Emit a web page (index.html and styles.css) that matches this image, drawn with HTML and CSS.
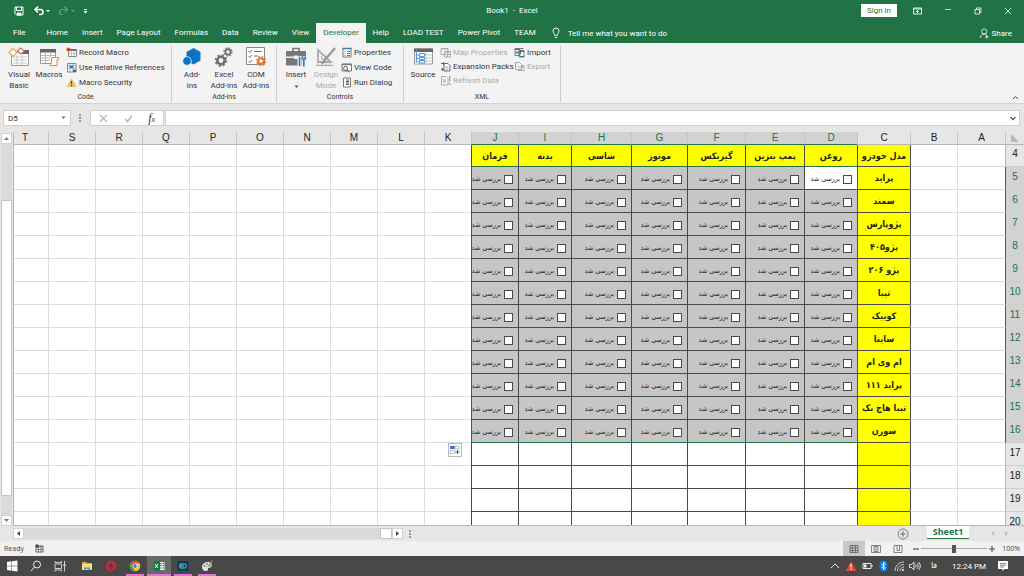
FILE: index.html
```html
<!DOCTYPE html>
<html lang="en">
<head>
<meta charset="utf-8">
<meta name="viewport" content="width=device-width, initial-scale=1">
<title>Book1 - Excel</title>
<link rel="stylesheet" href="styles.css">
</head>
<body>
<header class="titlebar">
  <div class="quick">
    <button class="plain" aria-label="Save"><svg width="12" height="12" viewBox="0 0 12 12" fill="none" stroke="#fff"><path d="M2 2h8v8H3.500L2 8.500z M3.500 2v3.500h5V2"/><path d="M4 8h4v2H4z" fill="#fff"/></svg></button>
    <button class="plain" aria-label="Undo"><svg width="17" height="12" viewBox="0 0 17 12"><path d="M2 4.500h5.500a2.500 2.500 0 0 1 0 5H6M5 1.500l-3 3 3 3" fill="none" stroke="#fff" stroke-width="1.600"/><path d="M13 5h4l-2 2z" fill="#fff"/></svg></button>
    <button class="plain faded" aria-label="Redo"><svg width="17" height="12" viewBox="0 0 17 12"><path d="M9.500 4.500H4a2.500 2.500 0 0 0 0 5h1M6.500 1.500l3 3-3 3" fill="none" stroke="#fff" stroke-width="1.200"/><path d="M13 5h4l-2 2z" fill="#fff"/></svg></button>
    <button class="plain" aria-label="Customize toolbar"><svg width="5" height="6" viewBox="0 0 5 6" fill="#fff"><path d="M1 1h3v1H1zM.500 3h4l-2 2.500z"/></svg></button>
  </div>
  <h1 class="doc-title">Book1&nbsp; -&nbsp; Excel</h1>
  <div class="window-tools">
    <button class="signin">Sign in</button>
    <button class="plain" aria-label="Ribbon display options"><svg width="9" height="8" viewBox="0 0 9 8" fill="none" stroke="#e5f0e9"><path d="M.5 1h8v6h-8zM.5 2h8M4.500 6.500V4M3 5l1.500-1.500L6 5"/></svg></button>
    <button class="plain" aria-label="Minimize"><svg width="8" height="8" viewBox="0 0 8 8" stroke="#b5d3c1"><path d="M1 2.500h6"/></svg></button>
    <button class="plain" aria-label="Restore"><svg width="8" height="8" viewBox="0 0 8 8" fill="none" stroke="#e5f0e9" stroke-width=".9"><path d="M1 2.500h4.500V7H1zM2.500 2.500V1H7v4.500H5.500"/></svg></button>
    <button class="plain" aria-label="Close"><svg width="8" height="8" viewBox="0 0 8 8" stroke="#e5f0e9" stroke-width=".9"><path d="M1 1l6 6M7 1L1 7"/></svg></button>
  </div>
</header>

<nav class="tabs">
  <a href="#" class="tab file">File</a><a href="#" class="tab">Home</a><a href="#" class="tab">Insert</a><a href="#" class="tab">Page Layout</a><a href="#" class="tab">Formulas</a><a href="#" class="tab">Data</a><a href="#" class="tab">Review</a><a href="#" class="tab">View</a><a href="#" class="tab active">Developer</a><a href="#" class="tab">Help</a><a href="#" class="tab">LOAD TEST</a><a href="#" class="tab">Power Pivot</a><a href="#" class="tab">TEAM</a>
  <button class="tell"><svg width="8" height="12" viewBox="0 0 8 12" fill="none" stroke="#fff" stroke-width=".9"><path d="M2.700 8.500C2.700 6.500 1 6 1 4a3 3 0 0 1 6 0c0 2-1.700 2.500-1.700 4.500zM2.700 10.500h2.600"/></svg>Tell me what you want to do</button>
  <button class="share"><svg width="9" height="11" viewBox="0 0 9 11" fill="none" stroke="#fff" stroke-width=".8"><circle cx="4.200" cy="3.500" r="2.600"/><path d="M.5 10c0-2.500 1.500-4 3.500-4 1 0 2 .5 2.500 1.200M6.800 7v3.500M5 8.800h3.600"/></svg>Share</button>
</nav>

<section class="ribbon">
  <div class="group g-code">
    <div class="tools">
      <button class="big"><svg width="22" height="20" viewBox="0 0 22 20"><path d="M3.500 5.500h17v13h-17z" fill="#fff" stroke="#999"/><path d="M12 3h9v4h-9z" fill="#666"/><path d="M5 10h14M5 13h14M5 16h14M9 8v10M14 8v10" stroke="#bbb" stroke-width=".8"/><path d="M5 1.500l4 4-4 4-4-4z" fill="#fff" stroke="#e9ae55" stroke-width="1.300"/><path d="M12.500 1l4 3-3.500 3-3.500-3z" fill="#fff" stroke="#dc6b6b" stroke-width="1.200"/></svg><span>Visual<br>Basic</span></button>
      <button class="big"><svg width="22" height="20" viewBox="0 0 22 20"><path d="M2.500 3h15v13.500h-15z" fill="#fff" stroke="#999"/><path d="M2 2h16v3.500H2z" fill="#666"/><path d="M3 8.500h14M3 11h9M3 13.500h9M7.500 6v10M12.500 6v4" stroke="#aaa" stroke-width=".8"/><path d="M13.500 10.500h7v2h-1.500v6h-7v-2h1.500z" fill="#fff" stroke="#e08b3a"/></svg><span>Macros</span></button>
      <div class="list">
        <button><svg viewBox="0 0 11 11"><path d="M2.500 2.500h8v7h-8z" fill="#fff" stroke="#888"/><path d="M2.500 3h8" stroke="#555" stroke-width="1.500"/><path d="M3 6.500h7M5.500 4v5M8 4v5" stroke="#aaa" stroke-width=".7"/><circle cx="2.500" cy="2.500" r="2.100" fill="#d24726"/></svg>Record Macro</button>
        <button><svg viewBox="0 0 11 11"><path d="M1.500 1.500h8.500v8.500H1.500z" fill="#fff" stroke="#888"/><path d="M1 3.500h9M1 6h9M4 1v9M7 1v9" stroke="#8a96a5" stroke-width=".8"/><path d="M4 4h3v2H4zM7 7.500h3V10H7z" fill="#2b6cb5"/></svg>Use Relative References</button>
        <button><svg viewBox="0 0 11 11"><path d="M5.500 1l5 9h-10z" fill="#edbd68"/><path d="M5.500 4v3.200M5.500 8v1.200" stroke="#554426" stroke-width="1.100"/></svg>Macro Security</button>
      </div>
    </div>
    <h2>Code</h2>
  </div>
  <div class="group g-addins">
    <div class="tools">
      <button class="big"><svg width="22" height="20" viewBox="0 0 22 20" fill="#0a72c7"><path d="M12.500 1l7 4v8.500l-7 4-7-4V5z"/><circle cx="6" cy="14" r="4.300" stroke="#f3f3f3" stroke-width=".8"/></svg><span>Add-<br>ins</span></button>
      <button class="big"><svg width="22" height="20" viewBox="0 0 22 20" fill="none" stroke="#707070"><circle cx="8" cy="13.500" r="3.700" stroke-width="2.600"/><circle cx="8" cy="13.500" r="5.400" stroke-width="1.800" stroke-dasharray="2.100 2.140"/><circle cx="15" cy="5" r="2.600" stroke-width="1.700"/><circle cx="15" cy="5" r="4" stroke-width="1.400" stroke-dasharray="1.600 1.540"/></svg><span>Excel<br>Add-ins</span></button>
      <button class="big"><svg width="22" height="20" viewBox="0 0 22 20" fill="none"><path d="M1.500 .5h18v17h-18z" fill="#fff" stroke="#888"/><path d="M3.500 4l1.500 1.500L7 3M3.500 9l1.500 1.500L7 8M3.500 14l1.500 1.500L7 13M9 4.500h8M9 9h4" stroke="#777"/><circle cx="16" cy="14" r="2.700" stroke="#e27a2c" stroke-width="2"/><circle cx="16" cy="14" r="4.300" stroke="#e27a2c" stroke-width="1.600" stroke-dasharray="1.700 1.680"/></svg><span>COM<br>Add-ins</span></button>
    </div>
    <h2>Add-ins</h2>
  </div>
  <div class="group g-controls">
    <div class="tools">
      <button class="big"><svg width="22" height="20" viewBox="0 0 22 20"><path d="M8 4V1.500h6V4" fill="none" stroke="#777" stroke-width="1.500"/><path d="M1 4h20v5.500H1zM1 11h20v7.500H1z" fill="#777"/><path d="M9 8.500h4v3.500H9z" fill="#eee"/><path d="M14.500 9.500v10M19 9.500v10" stroke="#f3f3f3" stroke-width="4"/><path d="M14.500 10v9M18.800 13v6.500M17.500 9.500v2.500h2.800V9.500" stroke="#3977b7" stroke-width="1.600" fill="none"/></svg><span>Insert</span><svg class="drop" width="5" height="4" viewBox="0 0 5 4"><path d="M.5 .5h4l-2 2.500z" fill="#555"/></svg></button>
      <button class="big" disabled><svg width="22" height="20" viewBox="0 0 22 20" fill="none" stroke="#aaa"><path d="M3 3v12h13z" stroke-width="1.800"/><path d="M6.500 9v3h4" /><path d="M20 1L9 14l-2 3" stroke="#999" stroke-width="2.300"/><path d="M1 18.500h18M3 16.500v2M7 16.500v2M11 16.500v2M15 16.500v2" /></svg><span>Design<br>Mode</span></button>
      <div class="list">
        <button><svg viewBox="0 0 11 11"><path d="M2 1.500h8v8.500H2z" fill="#fff" stroke="#777"/><path d="M1.500 1.500h9" stroke="#3977b7" stroke-width="1.500"/><path d="M3.500 4.500h1M6 4.500h3M3.500 6.500h1M6 6.500h3M3.500 8.500h1M6 8.500h3" stroke="#3977b7" stroke-width=".9"/></svg>Properties</button>
        <button><svg viewBox="0 0 11 11" fill="none"><path d="M1 2h9.500v7H1z" fill="#fff" stroke="#777"/><path d="M1 2.500h9.500" stroke="#777" stroke-width="1.500"/><circle cx="4.500" cy="6.500" r="2" fill="#fff" stroke="#555"/><path d="M6 8l2 2.300" stroke="#555"/></svg>View Code</button>
        <button><svg viewBox="0 0 11 11"><path d="M2.500 1h7v9h-7z" fill="#fff" stroke="#777"/><path d="M5 3h3M5 4.500h3M5 6h3M5 7.500h3" stroke="#444" stroke-width=".9"/></svg>Run Dialog</button>
      </div>
    </div>
    <h2>Controls</h2>
  </div>
  <div class="group g-xml">
    <div class="tools">
      <button class="big"><svg width="22" height="20" viewBox="0 0 22 20"><path d="M2.500 2h18v15h-18z" fill="#fff" stroke="#999"/><path d="M2 1.500h19V5H2z" fill="#666"/><path d="M3 8h17M3 11h17M3 14h17M14 5v12" stroke="#bbb" stroke-width=".8"/><path d="M4.500 2v13h3M4.500 8h3M4.500 11.500h3M7.500 6.500h5v3h-5zM7.500 10.500h5v2h-5zM7.500 13.500h5v2.500h-5z" fill="#fff" stroke="#4b8ed0" stroke-width=".9"/></svg><span>Source</span></button>
      <div class="list">
        <button disabled><svg viewBox="0 0 11 11"><path d="M1 1.500h7v6H1zM4.500 4.500h6v5.500h-6z" fill="#f6f6f6" stroke="#aaa"/><path d="M1 2h7M4.500 5h6M5 7.500h5M7.500 5v5" stroke="#aaa"/></svg>Map Properties</button>
        <button><svg viewBox="0 0 11 11"><path d="M4 2.500h4l2 2V10H4z" fill="#fff" stroke="#666"/><path d="M5.500 6h3M5.500 8h3" stroke="#999"/><path d="M1 2.500h4M3.500 1v3M1 8.500h3M2.500 7v3" stroke="#298060"/></svg>Expansion Packs</button>
        <button disabled><svg viewBox="0 0 11 11"><path d="M1.500 1.500H6l2 2V10H1.500z" fill="#f6f6f6" stroke="#aaa"/><path d="M3 5h3M3 7h3M9.700 1v5.500M9.700 8v2" stroke="#999" stroke-width="1.200"/></svg>Refresh Data</button>
      </div>
      <div class="list">
        <button><svg viewBox="0 0 11 11"><path d="M1 1.500h5v7H1zM5 3.500h5V10H5z" fill="#fff" stroke="#777"/><path d="M1 2.500h5M5 4.500h5M1.500 5h3M6.500 1.500h3" stroke="#666"/><path d="M2 6h5M5.500 4.500L7 6 5.500 7.500" fill="none" stroke="#2b71b5"/><path d="M6 9.500h4" stroke="#298060"/></svg>Import</button>
        <button disabled><svg viewBox="0 0 11 11" fill="none" stroke="#aaa"><path d="M1.500 1.500h4l2 2v5h-6z"/><path d="M4 9.500h6v-5H8M4 6h5M7.500 4.500L9 6 7.500 7.500"/></svg>Export</button>
      </div>
    </div>
    <h2>XML</h2>
  </div>
  <button class="plain collapse" aria-label="Collapse the ribbon"><svg width="7" height="5" viewBox="0 0 7 5" fill="none" stroke="#444"><path d="M1 4l2.500-2.500L6 4"/></svg></button>
</section>

<section class="formula">
  <button class="namebox"><span>D5</span><svg width="5" height="4" viewBox="0 0 5 4"><path d="M.5 .5h4l-2 2.500z" fill="#666"/></svg></button>
  <i class="dots"></i>
  <div class="fx-tools">
    <button class="plain" aria-label="Cancel"><svg width="9" height="9" viewBox="0 0 9 9" stroke="#b5b5b5" stroke-width="1.200"><path d="M1 1l7 7M8 1L1 8"/></svg></button>
    <button class="plain" aria-label="Enter"><svg width="9" height="9" viewBox="0 0 9 9" fill="none" stroke="#b5b5b5" stroke-width="1.500"><path d="M1 5l2.500 2.500L8 1.500"/></svg></button>
    <button class="plain fx" aria-label="Insert function">f<small>x</small></button>
  </div>
  <div class="entry"><input type="text" aria-label="Formula bar"><svg width="6" height="5" viewBox="0 0 6 5" fill="none" stroke="#555" stroke-width="1.300"><path d="M.5 1L3 3.500 5.500 1"/></svg></div>
</section>

<main class="sheet">
  <div class="vscroll">
    <button aria-label="Scroll up"><svg width="5" height="3" viewBox="0 0 5 3"><path d="M0 3h5L2.500 0z" fill="#777"/></svg></button>
    <div class="vtrack"><div class="vthumb"></div></div>
    <button aria-label="Scroll down"><svg width="5" height="3" viewBox="0 0 5 3"><path d="M0 0h5L2.500 3z" fill="#777"/></svg></button>
  </div>
  <div class="gridview" dir="rtl"><table class="grid" id="grid"></table></div>
</main>

<section class="sheetbar">
  <div class="hscroll">
    <button aria-label="Scroll left"><svg width="3" height="5" viewBox="0 0 3 5"><path d="M3 0v5L0 2.500z" fill="#444"/></svg></button>
    <div class="htrack"><div class="hthumb"></div></div>
    <button aria-label="Scroll right"><svg width="3" height="5" viewBox="0 0 3 5"><path d="M0 0v5l3-2.500z" fill="#444"/></svg></button>
  </div>
  <i class="dots"></i>
  <button class="plain add" aria-label="New sheet"><svg width="12" height="12" viewBox="0 0 12 12" fill="none" stroke="#777" stroke-width=".9"><circle cx="6" cy="6" r="5"/><path d="M6 3.200v5.600M3.200 6h5.600" stroke-width="1.200"/></svg></button>
  <a href="#" class="sheettab">Sheet1</a>
  <div class="sheetnav">
    <svg width="3" height="5" viewBox="0 0 3 5"><path d="M3 0v5L0 2.500z" fill="#bbb"/></svg>
    <svg width="3" height="5" viewBox="0 0 3 5"><path d="M0 0v5l3-2.500z" fill="#bbb"/></svg>
  </div>
</section>

<footer class="status">
  <span class="ready">Ready</span>
  <button class="plain" aria-label="Record macro"><svg width="9" height="9" viewBox="0 0 9 9"><path d="M1 2h7v6H1z" fill="#fff" stroke="#666"/><path d="M1 3h7M1 5.500h7M3.500 2v6M6 2v6" stroke="#666" stroke-width=".8"/><circle cx="2" cy="2" r="1.700" fill="#444"/></svg></button>
  <div class="views">
    <button class="plain on" aria-label="Normal view"><svg width="10" height="10" viewBox="0 0 10 10" fill="none" stroke="#666" stroke-width=".9"><path d="M1 1.500h8v7H1zM1 4h8M1 6.500h8M3.500 1.500v7M6.500 1.500v7"/></svg></button>
    <button class="plain" aria-label="Page layout view"><svg width="10" height="10" viewBox="0 0 10 10" fill="none" stroke="#777" stroke-width=".9"><path d="M.5 1.500h9v7h-9zM3 2.500h4v5H3zM4 4h2M4 6h2"/></svg></button>
    <button class="plain" aria-label="Page break view"><svg width="10" height="10" viewBox="0 0 10 10" fill="none" stroke="#777" stroke-width=".9"><path d="M1 1.500h8v7H1zM4 1.500v5h2.500v-5"/></svg></button>
  </div>
  <button class="plain zoomstep" aria-label="Zoom out"><svg width="6" height="6" viewBox="0 0 6 6" stroke="#555" stroke-width="1.200"><path d="M0 3h6"/></svg></button>
  <input class="zoom" type="range" min="10" max="190" value="100" aria-label="Zoom">
  <button class="plain zoomstep" aria-label="Zoom in"><svg width="6" height="6" viewBox="0 0 6 6" stroke="#555" stroke-width="1.200"><path d="M0 3h6M3 0v6"/></svg></button>
  <span class="percent">100%</span>
</footer>

<nav class="taskbar">
  <div class="launch">
    <button aria-label="Start"><svg width="12" height="12" viewBox="0 0 12 12" fill="#fff"><path d="M1 2l4.500-.7v4.400H1zM6 1.200L11.500.5v5.200H6zM1 6.200h4.500v4.500L1 10zM6 6.200h5.500v5.300L6 10.800z"/></svg></button>
    <button aria-label="Search"><svg width="12" height="12" viewBox="0 0 12 12" fill="none" stroke="#eee"><circle cx="7" cy="4.500" r="3.500"/><path d="M4.500 7L1 11"/></svg></button>
    <button aria-label="Task view"><svg width="12" height="12" viewBox="0 0 12 12" fill="none" stroke="#ddd" stroke-width=".9"><path d="M1 4h6.500v4.500H1zM1 1v1.500h6.500V1M1 11.500V10h6.500v1.500M10.500 1v10.500"/><path d="M10.500 4v2" stroke-width="2"/></svg></button>
  </div>
  <div class="apps">
    <button aria-label="File Explorer"><svg width="12" height="12" viewBox="0 0 12 12"><path d="M1 2h4l1 1h5v7H1z" fill="#e8ad30"/><path d="M1 4h10v6H1z" fill="#fbdc79"/><path d="M3 10V7.500h6V10H7.500V9h-3v1z" fill="#3c9ad8"/></svg></button>
    <button aria-label="Opera"><svg width="12" height="12" viewBox="0 0 12 12"><ellipse cx="6" cy="6" rx="3.800" ry="4" fill="none" stroke="#d8232e" stroke-width="2.800"/><ellipse cx="6" cy="6" rx="1.900" ry="3.500" fill="#484848"/></svg></button>
    <button class="open" aria-label="Chrome"><svg width="12" height="12" viewBox="0 0 12 12"><circle cx="6" cy="6" r="5.300" fill="#f2c32e"/><path d="M1.400 3.300a5.300 5.300 0 0 1 9.200 0H6L4 7.500z" fill="#df4b3c"/><path d="M1.400 3.300L5 9l.7 2.300A5.300 5.300 0 0 1 1.400 3.300z" fill="#35a457"/><circle cx="6" cy="6" r="2.500" fill="#fff"/><circle cx="6" cy="6" r="1.900" fill="#3c7de0"/></svg></button>
    <button class="open current" aria-label="Excel"><svg width="12" height="12" viewBox="0 0 12 12"><path d="M6 2h5.500v8H6z" fill="#e8f3ec"/><path d="M7 3.500h1.500M9.500 3.500H11M7 5.500h1.500M9.500 5.500H11M7 8h1.500M9.500 8H11" stroke="#217346"/><path d="M.5 1.800L7 .8v10.400L.5 10z" fill="#187442"/><path d="M2 4l3 4M5 4L2 8" stroke="#fff"/></svg></button>
    <button class="open" aria-label="Recorder"><svg width="12" height="12" viewBox="0 0 12 12"><rect x=".5" y="1" width="11" height="10" rx="1" fill="#063c52"/><path d="M3 4h4.500c2.500 0 2.500 4 0 4H3zM3 6h4" fill="none" stroke="#79cae0"/></svg></button>
    <button class="open" aria-label="Paint"><svg width="12" height="12" viewBox="0 0 12 12"><path d="M1 7c0-3 3-5 6-5s4.500 2.500 3.500 4.500S7 7 7 9s-1 2-2.500 2S1 9.500 1 7z" fill="#d5e4ea"/><circle cx="3.500" cy="6" r="1" fill="#cf5648"/><circle cx="6" cy="4" r="1" fill="#54a25a"/><circle cx="9" cy="5.500" r="1" fill="#3a84c7"/><path d="M11.500 .5L6.500 7" stroke="#c99554" stroke-width="1.200"/></svg></button>
  </div>
  <div class="tray">
    <button aria-label="Hidden icons"><svg width="10" height="10" viewBox="0 0 10 10" fill="none" stroke="#eee"><path d="M1 7l4-4 4 4"/></svg></button>
    <button aria-label="Alert"><svg width="12" height="12" viewBox="0 0 12 12"><path d="M6 1l5.500 10H.5z" fill="#df4a32"/><path d="M6 4v3.500M6 8.500V10" stroke="#fff" stroke-width="1.200"/></svg></button>
    <button aria-label="Battery"><svg width="11" height="8" viewBox="0 0 11 8"><path d="M1 1.500h8v5H1z" fill="none" stroke="#eee"/><path d="M2 2.500h2.500v3H2zM9.500 3h1v2h-1z" fill="#eee"/></svg></button>
    <button aria-label="Bluetooth"><svg width="9" height="12" viewBox="0 0 9 12"><rect x=".5" y=".5" width="8" height="11" rx="4" fill="#087bdc"/><path d="M2.500 4l4 4-2 2V2l2 2-4 4" fill="none" stroke="#fff" stroke-width=".9"/></svg></button>
    <button aria-label="Network"><svg width="11" height="11" viewBox="0 0 11 11" fill="none" stroke="#ddd" stroke-width=".9"><path d="M1 10c0-5 4-9 9-9M3.500 10c0-3.500 3-6.500 6.500-6.500M6 10c0-2.200 1.800-4 4-4"/><circle cx="9" cy="9" r=".8" fill="#ddd"/></svg></button>
    <button aria-label="Volume"><svg width="12" height="10" viewBox="0 0 12 10" fill="none" stroke="#eee" stroke-width=".9"><path d="M.5 3.500h2L5 1v8L2.500 6.500h-2zM6.500 3.500c.7 1 .7 2 0 3M8.200 2.200c1.300 1.800 1.300 3.800 0 5.600M9.800 1c2 2.500 2 5.500 0 8"/></svg></button>
    <button class="lang" lang="fa">فا</button>
    <time>12:24 PM</time>
    <button class="notify" aria-label="Notifications"><svg width="12" height="12" viewBox="0 0 12 12"><path d="M1 1h10v8H7.500L5.500 11V9H1z" fill="#fff"/><path d="M3 3.500h6M3 5.200h6M3 7h4" stroke="#666" stroke-width=".8"/></svg></button>
  </div>
</nav>
<script src="sheet.js"></script>
</body>
</html>
```

FILE: styles.css
```css
* { box-sizing: border-box; }

body {
  margin: 0;
  height: 100vh;
  display: flex;
  flex-direction: column;
  overflow: hidden;
  background: #e6e6e6;
  color: #333;
  font-family: Roboto, "Noto Sans", sans-serif;
  font-size: 8px;
  line-height: 11px;
}

button, input {
  font: inherit;
  color: inherit;
  margin: 0;
  padding: 0;
  border: 0;
  background: none;
}

button { white-space: nowrap; }
svg { display: block; flex: none; }
a { color: inherit; text-decoration: none; }
h1, h2 { margin: 0; font-size: inherit; font-weight: 400; }
.plain { display: flex; align-items: center; justify-content: center; }

/* Title bar */
.titlebar {
  flex: none;
  display: grid;
  grid-template-columns: 1fr auto 1fr;
  align-items: center;
  height: 23px;
  padding-bottom: 2px;
  background: #217346;
  color: #fff;
}
.quick { display: flex; align-items: center; gap: 8px; padding-left: 13px; }
.faded { opacity: .3; }
.window-tools {
  display: flex;
  align-items: center;
  justify-content: flex-end;
  gap: 22px;
  padding-right: 12px;
}
.signin { background: #fff; color: #217346; width: 36px; height: 13px; margin-right: -6px; }

/* Tabs */
.tabs { flex: none; display: flex; height: 20px; background: #217346; color: #fff; }
.tab { padding: 0 7px; line-height: 20px; white-space: nowrap; }
.tab.file { padding: 0 14px 0 13px; }
.tab.active { background: #f3f3f3; color: #217346; }
.tell { display: flex; align-items: center; gap: 8px; margin-left: 9px; }
.share { display: flex; align-items: center; gap: 3px; margin-left: auto; padding-right: 12px; }

/* Ribbon */
.ribbon {
  flex: none;
  display: flex;
  height: 61px;
  padding: 2px 0 1px;
  background: #f3f3f3;
  border-bottom: 1px solid #d2d2d2;
}
.group {
  display: flex;
  flex-direction: column;
  justify-content: space-between;
  border-right: 1px solid #cfcfcf;
}
.g-code { width: 172px; }
.g-addins { width: 105px; }
.g-controls { width: 127px; }
.g-xml { width: 157px; }
.group h2 { text-align: center; font-size: 7px; line-height: 10px; }
.tools { display: flex; }
.big {
  display: flex;
  flex-direction: column;
  align-items: center;
  flex: none;
  width: 30px;
  padding-top: 2px;
  gap: 2px;
}
.tools { padding-left: 4px; }
.g-code .list { margin-left: 2px; }
.g-addins .big { width: 32px; }
.drop { margin-top: 3px; }
.list { display: flex; flex-direction: column; }
.list button { display: flex; align-items: center; gap: 2px; height: 15px; }
.list svg { width: 11px; height: 11px; }
.g-xml .list { width: 68px; margin-left: 2px; }
.g-xml .list button { height: 14px; }
.g-xml .list + .list { margin-left: 6px; }
button:disabled { color: #aaa; }
.collapse { margin: auto 5px 0 auto; height: 9px; }

/* Formula bar */
.formula { flex: none; display: flex; align-items: center; height: 28px; padding: 0 4px 0 3px; }
.namebox {
  display: flex;
  align-items: center;
  justify-content: space-between;
  width: 68px;
  height: 16px;
  padding: 0 4px;
  background: #fff;
  border: 1px solid #d0d0d0;
}
.dots { width: 3px; height: 8px; margin: 0 8px; border-left: 2px dotted #999; }
.fx-tools {
  display: flex;
  justify-content: space-around;
  width: 74px;
  height: 16px;
  background: #fff;
  border: 1px solid #d0d0d0;
}
.fx { align-items: baseline; font: italic 12px/14px "Liberation Serif", serif; }
.fx small { font-size: 8px; }
.entry {
  display: flex;
  align-items: center;
  flex: 1;
  height: 16px;
  margin-left: 1px;
  padding-right: 3px;
  background: #fff;
  border: 1px solid #d0d0d0;
}
.entry input { flex: 1; outline: 0; }

/* Worksheet */
.sheet { flex: 1; display: flex; min-height: 0; }
.vscroll { flex: none; display: flex; flex-direction: column; width: 13px; padding: 1px 1px 0 1px; }
.vscroll button, .hscroll button {
  flex: none;
  display: flex;
  align-items: center;
  justify-content: center;
  width: 11px;
  height: 11px;
  background: #fff;
  border: 1px solid #d0d0d0;
}
.vtrack { flex: 1; display: flex; flex-direction: column; background: #dadada; }
.vtrack::before { content: ""; flex: 0 0 15%; }
.vthumb { height: 80%; background: #fff; border: 1px solid #c4c4c4; }
.gridview {
  flex: 1;
  min-width: 0;
  overflow: hidden;
  background: #fff;
  border-left: 1px solid #b5b5b5;
  border-bottom: 1px solid #b5b5b5;
}
.grid { table-layout: fixed; width: 1023px; border-collapse: separate; border-spacing: 0; }
.grid col { width: 47px; }
.grid .w-row { width: 19px; }
.grid .w-a { width: 48px; }
.grid .w-c, .grid .w-d, .grid .w-i { width: 53px; }
.grid .w-e { width: 59px; }
.grid .w-f { width: 58px; }
.grid .w-g { width: 56px; }
.grid .w-h { width: 60px; }
.grid th, .grid td {
  height: 23px;
  padding: 0;
  border-left: 1px solid #dcdcdc;
  border-bottom: 1px solid #dcdcdc;
  text-align: center;
  white-space: nowrap;
}
.grid th {
  background: #e6e6e6;
  color: #222;
  font: 10px/12px "Liberation Sans", sans-serif;
}
.grid thead th { height: 13px; border-left-color: #c4c4c4; border-bottom-color: #b5b5b5; }
.grid tbody th { padding-bottom: 3px; border-left-color: #b5b5b5; border-bottom-color: #cdcdcd; }
.grid .first th, .grid .first td { height: 22px; }
.grid thead th.sel { background: #d2d2d2; color: #217346; border-bottom-color: #217346; }
.grid tbody th.sel { background: #d2d2d2; color: #217346; border-left-color: #217346; }
.corner svg { margin: 0 auto; }
.grid td.ruled { border-color: #4a4a4a; }
.grid td.side { border-left-color: #4a4a4a; }
.grid td.name {
  background: #ff0;
  color: #222;
  font: bold 9px/12px "DejaVu Sans Condensed", "DejaVu Sans", sans-serif;
}
.grid td.check { background: #c6c6c6; }
.grid td.active { background: #fff; }
.grid td.edge-left { border-left-color: #217346; }
.grid td.edge-bottom { border-bottom-color: #217346; }
.check label {
  display: flex;
  align-items: center;
  gap: 3px;
  padding: 2px 5px 0 0;
  font: 7px/9px "DejaVu Sans Condensed", "DejaVu Sans", sans-serif;
  color: #222;
}
.check input {
  appearance: none;
  flex: none;
  width: 9px;
  height: 9px;
  background: #fff;
  border: 1px solid #4a4a4a;
}
.fillcell { position: relative; }
.fill {
  position: absolute;
  top: 0;
  right: 9px;
  width: 14px;
  height: 14px;
  background: #fff;
  border: 1px solid #bbb;
}

/* Sheet tabs */
.sheetbar { flex: none; display: flex; align-items: center; height: 15px; }
.hscroll { display: flex; width: 390px; margin-left: 13px; }
.htrack { flex: 1; display: flex; justify-content: flex-end; background: #dadada; }
.hthumb { width: 12px; background: #fff; border: 1px solid #c4c4c4; }
.sheetbar .dots { margin: 0 6px; }
.add { margin-left: auto; }
.sheettab {
  align-self: flex-start;
  width: 42px;
  height: 13px;
  margin-left: 18px;
  background: #fff;
  border-bottom: 1px solid #217346;
  color: #217346;
  font: bold 9px/11px "Open Sans", sans-serif;
  text-align: center;
}
.sheetnav { display: flex; gap: 11px; padding: 0 16px 0 22px; }

/* Status bar */
.status {
  flex: none;
  display: flex;
  align-items: center;
  height: 15px;
  padding: 0 4px;
  background: #f1f1f1;
  color: #444;
  font: 7px/11px "Open Sans", sans-serif;
}
.ready { margin-right: 11px; }
.views { display: flex; margin-left: auto; }
.views button { width: 22px; height: 15px; }
.views .on { background: #c8c8c8; }
.zoomstep { width: 10px; }
.views + .zoomstep { margin-left: 2px; }
.zoom { appearance: none; width: 66px; height: 10px; background: linear-gradient(#aaa, #aaa) center / 100% 1px no-repeat; }
.zoom::-webkit-slider-thumb { appearance: none; width: 4px; height: 8px; background: #555; }
.percent { margin-left: 5px; }

/* Taskbar */
.taskbar { flex: none; display: flex; height: 20px; background: #484848; color: #fff; }
.launch, .apps, .tray { display: flex; align-items: stretch; }
.apps { margin-left: 3px; }
.launch button, .apps button {
  display: flex;
  align-items: center;
  justify-content: center;
  width: 24px;
}
.apps .open { background: linear-gradient(#df73d6, #df73d6) bottom / 18px 2px no-repeat; }
.apps .current { background-color: #6a6a6a; background-size: 24px 2px; }
.tray { align-items: center; margin-left: auto; padding-right: 13px; }
.tray button { display: flex; align-items: center; justify-content: center; width: 16px; }
.tray .lang { width: 22px; font: 8px/12px "DejaVu Sans", sans-serif; }
.tray time { margin: 0 9px 0 7px; }
```

FILE: sheet.js
```javascript
const columns = "ABCDEFGHIJKLMNOPQRST".split("");
const headings = {
  C: "مدل خودرو", D: "روغن", E: "پمپ بنزین", F: "گیربکس",
  G: "موتور", H: "شاسی", I: "بدنه", J: "فرمان"
};
const models = ["پراید", "سمند", "پژوپارس", "پژو۴۰۵", "پژو ۲۰۶", "تیبا", "کوییک",
  "ساینا", "ام وی ام", "پراید ۱۱۱", "تیبا هاچ بک", "سورن"];
const isTask = c => c >= "D" && c <= "J";

function cell(c, row) {
  const classes = [];
  let content = "";
  const selected = row >= 5 && row <= 16;
  if (c >= "B" && c <= "J") classes.push(c === "B" ? "side" : "ruled");
  if (c === "C" || (row === 4 && isTask(c))) {
    classes.push("name");
    content = row === 4 ? headings[c] : models[row - 5] || "";
  } else if (isTask(c) && selected) {
    classes.push("check");
    content = `<label><input type="checkbox"><span>بررسی شد</span></label>`;
  }
  if (c === "D" && row === 5) classes.push("active");
  if (selected && (c === "C" || c === "J")) classes.push("edge-left");
  if (isTask(c) && (row === 4 || row === 16)) classes.push("edge-bottom");
  if (c === "K" && row === 17) {
    classes.push("fillcell");
    content = `<button class="fill" aria-label="Auto fill options"><svg width="12" height="12" viewBox="0 0 12 12"><path d="M1 2h5v3H1z" fill="#3f73c8"/><path d="M6 2h4v3H6zM1 6.500h5V9.500H1z" fill="#fff" stroke="#aaa" stroke-width=".8"/><path d="M8.500 6v4M6.500 8h4" stroke="#555"/></svg></button>`;
  }
  return `<td class="${classes.join(" ")}">${content}</td>`;
}

const corner = `<svg width="8" height="8" viewBox="0 0 8 8"><path d="M0 0v8h8z" fill="#b5b5b5"/></svg>`;
let html = `<colgroup><col class="w-row">${columns.map(c => `<col class="w-${c.toLowerCase()}">`).join("")}</colgroup>`;
html += `<thead><tr><th class="corner">${corner}</th>${columns.map(c => `<th class="${isTask(c) ? "sel" : ""}">${c}</th>`).join("")}</tr></thead><tbody>`;
for (let row = 4; row <= 20; row++) {
  html += `<tr class="${row === 4 ? "first" : ""}"><th class="${row >= 5 && row <= 16 ? "sel" : ""}">${row}</th>${columns.map(c => cell(c, row)).join("")}</tr>`;
}
document.getElementById("grid").innerHTML = html + "</tbody>";
```
